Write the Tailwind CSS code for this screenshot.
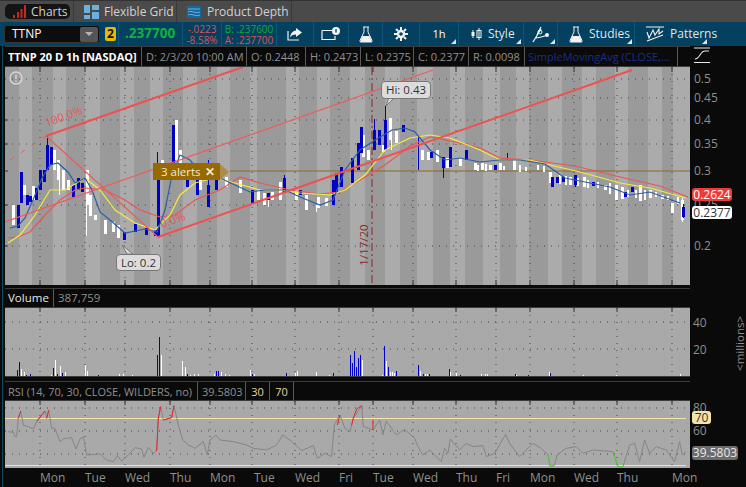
<!DOCTYPE html>
<html lang="en">
<head>
    <meta charset="UTF-8">
    <title>Charts - TTNP</title>
    <script src="https://cdn.jsdelivr.net/npm/@tailwindcss/browser@4"></script>
</head>
<body class="w-[746px] h-[487px] overflow-hidden bg-[#0a0a0a] font-['Open_Sans',sans-serif] text-[12px] leading-none whitespace-nowrap">

    <!-- Tabs -->
    <div class="h-[22px] bg-[#4a4a4a] flex items-center text-[#d2d2d2] text-[12px] border-t border-[#333]">
        <div class="w-[74px] h-full flex items-center border-r border-[#3a3a3a] pl-[5px]">
            <div class="w-[65px] h-[15px] bg-[#141414] rounded-[5px] flex items-center gap-[5px] pl-[8px]">
                <svg width="13" height="13" viewBox="0 0 13 13"><path d="M0 13V10H2V13ZM4 13V7H6V13ZM7.500 13V4H9.500V13ZM11 13V0H13V13Z" fill="#c8291f"/></svg>
                <span>Charts</span>
            </div>
        </div>
        <div class="w-[103px] h-full flex items-center gap-[5px] pl-[10px] border-r border-[#3a3a3a]">
            <svg width="15" height="14" viewBox="0 0 15 14"><path d="M0 0H6V8H0ZM8 0H15V5H8ZM8 7H15V14H8ZM0 10H6V14H0Z" fill="#6cb1de"/></svg>
            <span>Flexible Grid</span>
        </div>
        <div class="w-[115px] h-full flex items-center gap-[6px] pl-[10px] border-r border-[#3a3a3a]">
            <svg class="w-[14px] h-[12px]" viewBox="0 0 14 12"><rect width="14" height="12" fill="#14689c"/><path d="M1 3H13M1 6C5 4 8 8 13 6M1 9C5 7 8 11 13 9" stroke="#6fb2d8" fill="none"/></svg>
            <span>Product Depth</span>
        </div>
    </div>

    <!-- Toolbar -->
    <div class="h-[24px] bg-[#04405f] flex items-center text-white">
        <div class="w-[119px] h-full flex items-center pl-[4px] gap-[5px] border-r border-[#0f5676] relative">
            <div class="w-[96px] h-[18px] bg-[#0d0d0d] rounded-[3px] border border-[#333] flex items-center justify-between pl-[7px] pr-[1px]">
                <span class="text-[12px]">TTNP</span>
                <div class="w-[18px] h-[15px] bg-[#555] rounded-[2px] flex items-center justify-center">
                    <div class="w-0 h-0 border-l-[4px] border-r-[4px] border-t-[4px] border-l-transparent border-r-transparent border-t-[#b5b5b5]"></div>
                </div>
            </div>
            <div class="w-[11px] h-[14px] bg-[#e9b800] rounded-[2px] flex items-center justify-center text-[#111] font-bold text-[12px]">2</div>
        </div>
        <div class="w-[64px] h-full flex items-center pl-[6px] border-r border-[#0f5676] text-[#12b23a] font-bold text-[13.5px]">.237700</div>
        <div class="w-[39px] h-full flex flex-col justify-center items-center gap-[1px] border-r border-[#0f5676] text-[#d5545a] text-[10px]">
            <span>-.0223</span><span>-8.58%</span>
        </div>
        <div class="w-[55px] h-full flex flex-col justify-center items-center gap-[1px] border-r border-[#0f5676] text-[10px]">
            <span class="text-[#12a83a]">B: .237600</span><span class="text-[#d5545a]">A: .237700</span>
        </div>
        <div class="w-[37px] h-full flex items-center justify-center border-r border-[#0f5676]">
            <svg width="16" height="14" viewBox="0 0 16 14" fill="none"><path d="M9 1L15 5.500L9 10V7.500C6 7.500 4 8.500 3 10.500C3.500 6.500 6 3.500 9 3.500Z" fill="#f2f2f2"/><path d="M1 4V13H12" stroke="#f2f2f2" stroke-width="1.200"/></svg>
        </div>
        <div class="w-[35px] h-full flex items-center justify-center border-r border-[#0f5676]">
            <svg width="20" height="14" viewBox="0 0 20 14" fill="none"><path d="M1 3.500H11M1 3.500V12.500H14V9" stroke="#f2f2f2" stroke-width="1.200"/><circle cx="15" cy="4" r="4" fill="#f2f2f2"/><path d="M15 2V5.500" stroke="#04405f" stroke-width="1.300"/></svg>
        </div>
        <div class="w-[34px] h-full flex items-center justify-center border-r border-[#0f5676]">
            <svg width="14" height="17" viewBox="0 0 14 17" fill="none"><path d="M4 1H10M5 1V6L1 14.500C.7 15.500 1 16 2 16H12C13 16 13.300 15.500 13 14.500L9 6V1" stroke="#f2f2f2"/><path d="M3.300 10H10.700L13 16H1Z" fill="#f2f2f2"/></svg>
        </div>
        <div class="w-[37px] h-full flex items-center justify-center border-r border-[#0f5676]">
            <svg width="14" height="14" viewBox="0 0 14 14" fill="none"><circle cx="7" cy="7" r="3" stroke="#f2f2f2" stroke-width="2.400"/><path d="M7 0V3M7 11V14M0 7H3M11 7H14M2 2L4 4M10 10L12 12M12 2L10 4M4 10L2 12" stroke="#f2f2f2" stroke-width="2"/></svg>
        </div>
        <div class="w-[39px] h-full flex items-center justify-center border-r border-[#0f5676] text-[11px] relative pb-[1px]">1h
            <div class="absolute right-[2px] bottom-[2px] w-0 h-0 border-b-[5px] border-l-[5px] border-l-transparent border-b-[#d8e4ea]"></div>
        </div>
        <div class="w-[65px] h-full flex items-center gap-[6px] pl-[12px] border-r border-[#0f5676] text-[#dfe7eb] relative">
            <svg width="11" height="14" viewBox="0 0 11 14" fill="none"><path d="M2 3V11M8 1V13" stroke="#f2f2f2"/><rect x=".5" y="5" width="3" height="4" fill="#f2f2f2"/><rect x="6" y="3.500" width="4" height="7" stroke="#f2f2f2"/></svg>
            <span>Style</span>
            <div class="absolute right-[2px] bottom-[2px] w-0 h-0 border-b-[5px] border-l-[5px] border-l-transparent border-b-[#d8e4ea]"></div>
        </div>
        <div class="w-[34px] h-full flex items-center justify-center border-r border-[#0f5676] relative">
            <svg width="18" height="17" viewBox="0 0 18 17" fill="none"><path d="M1 16L9 3M3 12C7 12 10 11 16 9M5 9L9 1" stroke="#f2f2f2" stroke-width="1.300"/><circle cx="15" cy="9" r="2" fill="#f2f2f2"/><circle cx="8" cy="6" r="2" stroke="#f2f2f2"/></svg>
            <div class="absolute right-[2px] bottom-[2px] w-0 h-0 border-b-[5px] border-l-[5px] border-l-transparent border-b-[#d8e4ea]"></div>
        </div>
        <div class="w-[77px] h-full flex items-center gap-[6px] pl-[11px] border-r border-[#0f5676] text-[#dfe7eb] relative">
            <svg width="14" height="17" viewBox="0 0 14 17" fill="none"><path d="M4 1H10M5 1V6L1 14.500C.7 15.500 1 16 2 16H12C13 16 13.300 15.500 13 14.500L9 6V1" stroke="#f2f2f2"/><path d="M3.300 10H10.700L13 16H1Z" fill="#f2f2f2"/></svg>
            <span>Studies</span>
            <div class="absolute right-[2px] bottom-[2px] w-0 h-0 border-b-[5px] border-l-[5px] border-l-transparent border-b-[#d8e4ea]"></div>
        </div>
        <div class="flex-1 h-full flex items-center gap-[6px] pl-[11px] text-[#dfe7eb] relative">
            <svg width="18" height="16" viewBox="0 0 18 16" fill="none"><path d="M0 1H18M1 6L3 12L7 4L9 9L13 3L13 8L17 5M1 15L17 9" stroke="#f2f2f2" stroke-width="1.100"/></svg>
            <span>Patterns</span>
            <div class="absolute left-[67px] bottom-[2px] w-0 h-0 border-b-[5px] border-l-[5px] border-l-transparent border-b-[#d8e4ea]"></div>
        </div>
    </div>

    <!-- Chart area -->
    <div class="h-[441px] flex">
        <div class="w-[5px] h-full bg-[#0a0a0a] flex justify-center"><div class="w-px h-full bg-[#0f4a60]"></div></div>

        <div class="w-[685px] h-full flex flex-col">

            <!-- Price status row -->
            <div class="h-[21px] flex items-stretch border-y border-[#3c3c3c] text-[#8f8f8f] text-[11px] divide-x divide-[#5a5a5a]">
                <div class="w-[137px] flex items-center pl-[3px] text-white font-bold text-[11px]">TTNP 20 D 1h [NASDAQ]</div>
                <div class="w-[105px] flex items-center pl-[4px]">D: 2/3/20 10:00 AM</div>
                <div class="w-[59px] flex items-center pl-[4px]">O: 0.2448</div>
                <div class="w-[55px] flex items-center pl-[4px]">H: 0.2473</div>
                <div class="w-[53px] flex items-center pl-[4px]">L: 0.2375</div>
                <div class="w-[55px] flex items-center pl-[4px]">C: 0.2377</div>
                <div class="w-[56px] flex items-center pl-[4px]">R: 0.0098</div>
                <div class="w-[153px] flex items-center pl-[3px] text-[#1a2f86]">SimpleMovingAvg (CLOSE,...</div>
                <div class="flex-1"></div>
            </div>

            <!-- Price plot -->
            <div class="h-[218px] relative bg-[#9a9a9a]">
                <svg class="block" width="685" height="218" viewBox="5 67 685 218" fill="none">
                    <!-- session bands -->
                    <path fill="#ababab" d="M19 67H32V285H19ZM53 67H66V285H53ZM85 67H100V285H85ZM120 67H134V285H120ZM150 67H163V285H150ZM183 67H197V285H183ZM217 67H230V285H217ZM250 67H257V285H250ZM286 67H299V285H286ZM317 67H330V285H317ZM350 67H365V285H350ZM385 67H400V285H385ZM417 67H433V285H417ZM450 67H465V285H450ZM483 67H500V285H483ZM516 67H529V285H516ZM548 67H562V285H548ZM582 67H596V285H582ZM615 67H628V285H615ZM648 67H662V285H648ZM673 67H690V285H673Z"/>
                    <!-- grid -->
                    <path stroke="#444" stroke-dasharray="1 6" d="M5 98H690M5 120H690M5 144H690M5 205H690M5 246H690M5 79H690"/>
                    <path stroke="#444" stroke-dasharray="1 6" d="M40 67V285M85 67V285M125 67V285M170 67V285M210 67V285M252 67V285M295 67V285M339 67V285M413 67V285M456 67V285M496 67V285M530 67V285M574 67V285M617 67V285M672 67V285"/>
                    <path stroke="#333" d="M5 98H8M5 120H8M5 144H8M5 171H8M5 205H8M5 246H8M40 67V72M85 67V72M125 67V72M170 67V72M210 67V72M252 67V72M295 67V72M339 67V72M373 67V72M413 67V72M456 67V72M496 67V72M530 67V72M574 67V72M617 67V72M672 67V72"/>
                    <path stroke="#333" d="M40 280V285M85 280V285M125 280V285M170 280V285M210 280V285M252 280V285M295 280V285M339 280V285M413 280V285M456 280V285M496 280V285M530 280V285M574 280V285M617 280V285M672 280V285"/>

                    <path stroke="#8a6a1e" d="M230 171H690"/>
                    <path stroke="#8b2626" stroke-dasharray="8 3 2 3" d="M372 67V285"/>

                    <!-- white bars -->
                    <g shape-rendering="crispEdges" stroke="#fff">
                        <path stroke-width="3" d="M13 205V225M24 185V195M33 186V200M54 150V170M58 160V180M63 170V190M68 180V190M87 170V205M90 195V216M95 215V220M105 220V234M113 222V232M118 225V238M162 160V180M176 120V160M180 150V170M200 175V190M226 177V187M240 180V193M258 190V200M264 193V205M272 192V200M280 182V200M296 190V200M306 195V210M318 197V208M326 198V206M363 135V157M368 150V160M383 145V152M390 118V140M396 131V143M422 150V160M428 152V160M437 150V162M447 158V168M460 158V166M475 163V170M482 163V170M490 165V170M500 163V170M514 160V170M550 172V183M570 177V185M584 177V187M605 185V190M616 185V200M622 187V199M640 185V201M650 190V198M662 195V199M672 203V213M682 200V220"/>
                        <path stroke-width="2" d="M478 165V171M486 164V171M504 166V170M520 165V172M526 167V171M538 165V170M544 166V172M560 175V184M566 176V185M578 178V186M588 180V188M598 182V188M610 183V194M628 190V197M636 190V198M645 190V200M656 192V197M668 196V200M678 197V204"/>
                        <path d="M86 200V236M59 180V195M268 200V207M176 160V180M316 205V212M391 140V150M682 198V222"/>
                    </g>
                    <!-- blue bars -->
                    <g shape-rendering="crispEdges" stroke="#0000c8">
                        <path stroke-width="3" d="M18 205V228M21 172V203M27 195V205M30 196V202M36 188V200M40 170V190M44 170V182M47 145V170M51 147V165M73 185V197M78 178V190M82 183V192M124 232V240M135 224V232M146 228V235M155 230V236M158 180V236M173 125V167M187 175V187M197 180V195M208 185V207M216 180V190M252 190V203M268 193V200M284 178V193M300 190V195M333 180V205M336 173V193M341 167V187M352 158V183M358 143V170M361 127V153M374 130V150M379 130V145M385 120V150M403 125V132M431 152V158M443 157V168M450 147V167M466 150V160M495 165V170M552 177V187M557 177V183M563 177V182M575 175V185M593 182V186M625 192V197M632 187V192M683 207V217"/>
                        <path d="M47 136V150M157 152V180M208 160V185M284 175V180M374 119V130M385 106V120M418 137V170M443 168V178M507 153V160M575 185V187M683 204V218"/>
                    </g>

                    <!-- moving averages -->
                    <polyline stroke="#ef5454" stroke-width="1.200" points="8,238 18,237 30,232 45,215 60,200 75,190 85,188 105,190 125,200 140,210 160,217 175,215 195,200 220,190 240,177 260,183 290,190 320,194 340,192 360,180 385,165 410,146 430,137 455,142 480,148 500,158 530,160 575,166 620,177 660,186 688,197"/>
                    <polyline stroke="#f4ec3a" stroke-width="1.200" points="8,243 20,235 35,215 50,190 65,190 85,178 100,190 115,210 135,223 155,230 170,215 180,195 195,183 215,178 235,183 260,190 280,190 300,193 330,195 345,190 365,175 385,150 410,138 430,135 450,138 480,150 500,160 530,160 550,165 580,172 620,183 650,188 686,198"/>
                    <polyline stroke="#2a5fa8" stroke-width="1.200" points="10,228 18,226 25,218 33,200 42,178 50,165 58,163 68,172 75,183 85,178 92,190 100,212 110,220 125,233 145,229 157,232 165,210 172,175 180,155 190,160 200,172 210,178 220,178 235,185 250,192 265,190 285,190 300,197 320,205 333,200 345,170 360,150 375,140 392,130 405,128 415,132 430,150 445,160 460,158 480,162 500,160 520,160 545,164 565,178 590,183 610,187 630,195 650,192 680,203"/>

                    <!-- channel -->
                    <path stroke="#f25050" stroke-width="2" d="M46 136L243 67M158 237L632 70"/>
                    <path stroke="#ef5b5b" stroke-width="1.200" d="M5 222L433 70M46 136L158 237"/>
                    <path stroke="#ef5b5b" stroke-dasharray="5 8" d="M10 160L46 136"/>
                    <text transform="rotate(-20 46 125)" x="46" y="127" fill="#e25a5a" font-size="11.500">100.0%</text>
                    <text transform="rotate(-20 162 225)" x="161" y="228" fill="#e25a5a" font-size="11.500">0.0%</text>
                    <text transform="translate(368 245) rotate(-90)" fill="#8b2626" font-size="11.500" text-anchor="middle">1/17/20</text>

                    <!-- warning mark -->
                    <circle cx="16" cy="78" r="6" stroke="#d8d8d8" stroke-width="1.300"/>
                    <path d="M16 74.500V79M16 80.500V82" stroke="#d8d8d8" stroke-width="1.500"/>
                    <!-- callout tails -->
                    <path d="M386 106L389 97H395Z" fill="#d9d9d9" stroke="#777"/>
                    <path d="M122 245L127 254H133Z" fill="#d9d9d9" stroke="#777"/>
                </svg>

                <div class="absolute left-[376px] top-[14px] w-[50px] h-[18px] bg-[#dcdcdc] border border-[#777] rounded-[4px] flex items-center justify-center text-[#333] text-[11.5px]">Hi: 0.43</div>
                <div class="absolute left-[111px] top-[187px] w-[45px] h-[17px] bg-[#dcdcdc] border border-[#777] rounded-[4px] flex items-center justify-center text-[#333] text-[11.5px]">Lo: 0.2</div>

                <!-- alerts tag -->
                <div class="absolute left-[148px] top-[96px] h-[17px] flex items-center">
                    <div class="w-[67px] h-full bg-[#966a00] text-[#f3e8cf] text-[11.5px] flex items-center pl-[8px] gap-[4px]"><span>3 alerts</span><span class="font-bold text-[12px]">✕</span></div>
                    <div class="w-0 h-0 border-y-[8.500px] border-l-[9px] border-y-transparent border-l-[#a98d48]"></div>
                </div>
            </div>

            <!-- Volume -->
            <div class="h-[3px]"></div>
            <div class="h-[20px] flex items-stretch border-y border-[#3c3c3c] text-[11.5px] divide-x divide-[#5a5a5a]">
                <div class="w-[49px] flex items-center pl-[3px] text-[#e6e6e6]">Volume</div>
                <div class="w-[48px] flex items-center pl-[4px] text-[#8f8f8f]">387,759</div>
            </div>
            <div class="h-[68px] bg-[#a9a9a9]">
                <svg class="block" width="685" height="68" viewBox="5 308 685 68" fill="none">
                    <path stroke="#444" stroke-dasharray="1 6" d="M5 322H690M5 349H690M40 308V376M85 308V376M125 308V376M170 308V376M210 308V376M252 308V376M295 308V376M339 308V376M373 308V376M413 308V376M456 308V376M496 308V376M530 308V376M574 308V376M617 308V376M672 308V376"/>
                    <path stroke="#333" d="M40 308V312M85 308V312M125 308V312M170 308V312M210 308V312M252 308V312M295 308V312M339 308V312M373 308V312M413 308V312M456 308V312M496 308V312M530 308V312M574 308V312M617 308V312M672 308V312"/>
                    <g shape-rendering="crispEdges">
                        <path stroke="#0000c8" d="M17.500 370V376M19.500 362V376M26.500 375V376M30.500 374V376M53.500 368V376M57.500 374V376M62.500 373V376M98.500 375V376M157.500 355V376M159.500 337V376M187.500 374V376M216.500 371V376M218.500 371V376M252.500 374V376M286.500 373V376M333.500 373V376M350.500 355V376M352.500 363V376M354.500 351V376M356.500 367V376M358.500 358V376M360.500 355V376M384.500 346V376M388.500 367V376M396.500 371V376M418.500 365V376M423.500 374V376M429.500 374V376M449.500 369V376M460.500 375V376M515.500 374V376M528.500 375V376M550.500 373V376"/>
                        <path stroke="#fff" d="M21.500 369V376M24.500 372V376M51.500 375V376M55.500 360V376M60.500 366V376M65.500 372V376M85.500 365V376M87.500 371V376M119.500 374V376M123.500 374V376M132.500 375V376M161.500 355V376M182.500 361V376M185.500 367V376M190.500 375V376M194.500 374V376M198.500 374V376M214.500 374V376M221.500 372V376M225.500 374V376M229.500 375V376M250.500 370V376M254.500 374V376M295.500 373V376M297.500 371V376M316.500 372V376M329.500 375V376M362.500 360V376M382.500 375V376M386.500 361V376M390.500 372V376M392.500 372V376M394.500 373V376M420.500 371V376M425.500 374V376M427.500 374V376M450.500 372V376M456.500 373V376M481.500 374V376M485.500 374V376M487.500 374V376M516.500 375V376M549.500 372V376M583.500 375V376M616.500 375V376M680.500 374V376"/>
                    </g>
                </svg>
            </div>

            <!-- RSI -->
            <div class="h-[5px] border-t border-[#3c3c3c]"></div>
            <div class="h-[20px] flex items-stretch border-y border-[#3c3c3c] text-[11px] divide-x divide-[#5a5a5a]">
                <div class="w-[193px] flex items-center pl-[3px] text-[#8f8f8f]">RSI (14, 70, 30, CLOSE, WILDERS, no)</div>
                <div class="w-[48px] flex items-center pl-[4px] text-[#8f8f8f]">39.5803</div>
                <div class="w-[24px] flex items-center justify-center text-[#e7d59c]">30</div>
                <div class="w-[24px] flex items-center justify-center text-[#e7d59c] border-r border-[#5a5a5a]">70</div>
            </div>
            <div class="h-[67px] bg-[#a9a9a9]">
                <svg class="block" width="685" height="67" viewBox="5 401 685 67" fill="none">
                    <path stroke="#444" stroke-dasharray="1 6" d="M5 408H690M5 431H690M5 454H690M40 401V468M85 401V468M125 401V468M170 401V468M210 401V468M252 401V468M295 401V468M339 401V468M373 401V468M413 401V468M456 401V468M496 401V468M530 401V468M574 401V468M617 401V468M672 401V468"/>
                    <path stroke="#333" d="M40 401V405M85 401V405M125 401V405M170 401V405M210 401V405M252 401V405M295 401V405M339 401V405M373 401V405M413 401V405M456 401V405M496 401V405M530 401V405M574 401V405M617 401V405M672 401V405"/>
                    <path stroke="#f3e4a8" stroke-width="1.200" d="M5 418.500H686M5 465.500H686"/>
                    <g transform="translate(0 285) scale(.3333)" stroke-width="3">
                        <polyline stroke="#858585" points="24,440 40,442 45,455 50,455 55,400 62,378 70,420 85,425 100,432 110,410 135,378 140,400 146,376 155,430 165,430 180,470 190,462 200,460 215,458 228,492 240,462 250,455 260,510 300,507 320,525 340,530 352,512 365,528 385,510 405,488 425,492 432,517 445,487 460,505 470,498 475,400 482,365 490,405 515,398 522,362 535,420 548,465 565,480 585,490 610,470 622,510 630,465 648,450 660,465 700,470 740,480 760,490 800,495 830,480 848,450 870,465 905,497 940,482 952,520 975,505 995,515 1003,420 1020,390 1035,430 1050,440 1060,400 1085,362 1090,425 1119,435 1139,405 1149,450 1159,408 1189,450 1214,433 1244,460 1254,485 1269,510 1289,495 1324,530 1334,490 1344,505 1351,462 1379,495 1399,475 1419,485 1449,482 1459,515 1484,505 1517,448 1529,475 1559,515 1599,475 1624,490 1644,510 1651,545 1664,540 1671,510 1699,490 1729,485 1749,505 1779,495 1839,500 1854,545 1869,545 1889,480 1904,475 1919,530 1934,465 1949,505 1969,485 1999,495 2024,530 2039,470 2047,510 2059,500"/>
                        <path stroke="#ee2222" d="M55,400L62,378M110,410L135,378M140,400L146,376M470,498L475,400L482,365M490,405L515,398L522,362M1012,420L1020,390M1055,420L1060,400L1070,372L1085,362M1119,435V405"/>
                        <path stroke="#44d32a" d="M1644,510L1651,545L1664,540M1839,500L1854,545L1869,545"/>
                    </g>
                </svg>
            </div>

            <!-- Time axis -->
            <svg class="block overflow-visible" width="685" height="19" viewBox="5 468 685 19">
                <g fill="#8f8f8f" font-size="12">
                    <text x="40" y="482">Mon</text><text x="85" y="482">Tue</text><text x="125" y="482">Wed</text><text x="170" y="482">Thu</text><text x="210" y="482">Mon</text><text x="254" y="482">Tue</text><text x="295" y="482">Wed</text><text x="339" y="482">Fri</text><text x="373" y="482">Tue</text><text x="413" y="482">Wed</text><text x="456" y="482">Thu</text><text x="496" y="482">Fri</text><text x="530" y="482">Mon</text><text x="574" y="482">Wed</text><text x="617" y="482">Thu</text><text x="672" y="482">Mon</text>
                </g>
            </svg>
        </div>

        <!-- Right axis -->
        <div class="w-[56px] h-full relative text-[#8f8f8f] text-[12px]">
            <svg class="absolute left-[4px] top-[1px]" width="17" height="17" viewBox="0 0 17 17" fill="none"><path d="M0 1H16M0 15.500H16M1 12C6 12 6 4 11 4H15" stroke="#e8e8e8" stroke-width="1.100"/></svg>
            <span class="absolute left-[4px] top-[27px]">0.5</span>
            <span class="absolute left-[4px] top-[46px]">0.45</span>
            <span class="absolute left-[4px] top-[68px]">0.4</span>
            <span class="absolute left-[4px] top-[92px]">0.35</span>
            <span class="absolute left-[4px] top-[119px]">0.3</span>
            <span class="absolute left-[4px] top-[153px]">0.25</span>
            <span class="absolute left-[4px] top-[194px]">0.2</span>
            <div class="absolute left-[2px] top-[142px] w-[40px] h-[13px] rounded-[3px] bg-[#f03a3a] text-white flex items-center justify-center">0.2624</div>
            <div class="absolute left-[2px] top-[160px] w-[40px] h-[13px] rounded-[3px] bg-white text-[#333] flex items-center justify-center">0.2377</div>
            <span class="absolute left-[3px] top-[271px]">40</span>
            <span class="absolute left-[3px] top-[298px]">20</span>
            <span class="absolute left-[3px] top-[356px]">80</span>
            <span class="absolute left-[3px] top-[379px]">60</span>
            <div class="absolute left-[2px] top-[365px] w-[19px] h-[13px] rounded-[3px] bg-[#f3e4a8] text-[#333] flex items-center justify-center">70</div>
            <div class="absolute left-[2px] top-[400px] w-[46px] h-[14px] rounded-[3px] bg-[#6c6c6c] text-[#e8e8e8] flex items-center justify-center">39.5803</div>
            <span class="absolute left-[44px] top-[270px] [writing-mode:vertical-rl] rotate-180 text-[11.5px]">&lt;millions&gt;</span>
        </div>
    </div>
</body>
</html>
